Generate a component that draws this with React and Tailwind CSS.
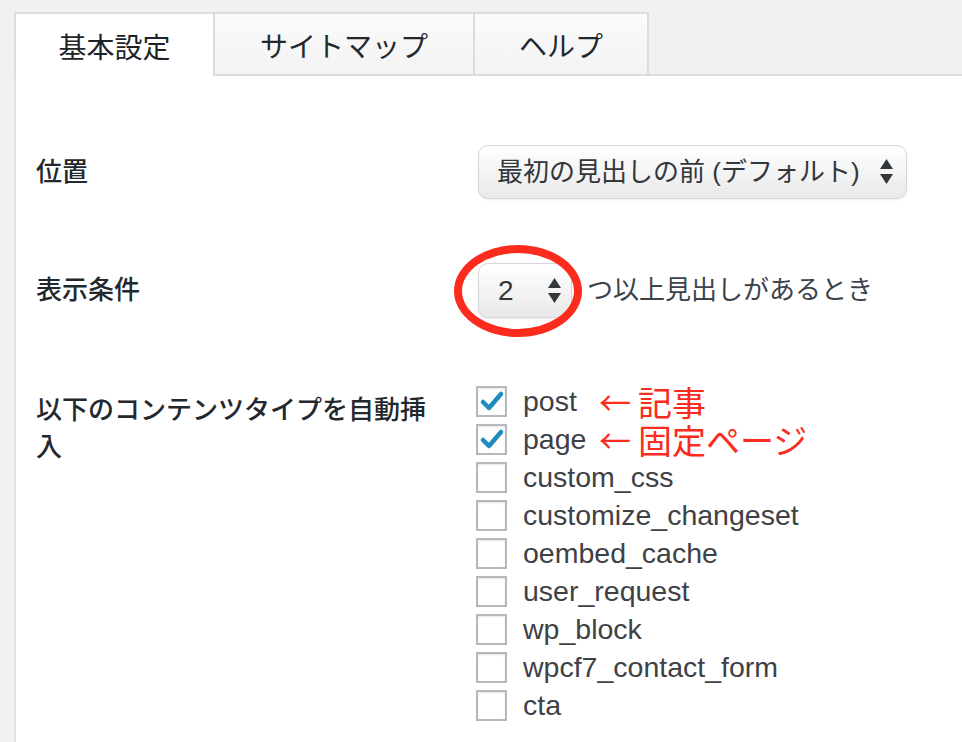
const TYPES = [
  { name: 'post', checked: true, note: '記事' },
  { name: 'page', checked: true, note: '固定ページ' },
  { name: 'custom_css' },
  { name: 'customize_changeset' },
  { name: 'oembed_cache' },
  { name: 'user_request' },
  { name: 'wp_block' },
  { name: 'wpcf7_contact_form' },
  { name: 'cta' },
]

function Arrows() {
  return (
    <svg width="13" height="26" viewBox="0 0 13 26" className="shrink-0">
      <path d="M6.5 0 L13 10 L0 10 Z" fill="#32373c" />
      <path d="M0 15 L13 15 L6.5 25 Z" fill="#32373c" />
    </svg>
  )
}

function Check() {
  return (
    <svg width="27" height="27" viewBox="0 0 27 27">
      <path d="M5 14 L11 20 L23 6" fill="none" stroke="#1e8cbe" strokeWidth="4.5" strokeLinejoin="round" strokeLinecap="round" />
    </svg>
  )
}

export default function App() {
  return (
    <div className="w-[962px] h-[742px] overflow-hidden bg-[#f1f1f1] pt-3 pl-[14px] font-['Liberation_Sans','Noto_Sans_CJK_JP',sans-serif]">
      <div className="flex h-16">
        <div className="w-[201px] border-2 border-b-0 border-[#dcdcdc] bg-white flex items-center justify-center pt-2 text-[28px] text-[#1d2327]">
          基本設定
        </div>
        <div className="w-[260px] border-y-2 border-r-2 border-[#dcdcdc] bg-gradient-to-b from-[#fbfbfb] to-[#f3f3f3] flex items-center justify-center pt-2 text-[28px] text-[#23282d]">
          サイトマップ
        </div>
        <div className="w-[174px] border-y-2 border-r-2 border-[#dcdcdc] bg-gradient-to-b from-[#fbfbfb] to-[#f3f3f3] flex items-center justify-center pt-2 text-[28px] text-[#23282d]">
          ヘルプ
        </div>
        <div className="flex-1 border-b-2 border-[#dcdcdc]" />
      </div>

      <div className="bg-white border-l-2 border-[#e2e2e2] h-full pl-5">
        <div className="flex items-center pt-[69px]">
          <div className="w-[442px] text-[26px] font-medium text-[#23282d]">位置</div>
          <div className="w-[429px] h-[54px] rounded-[10px] border border-[#d6d6d6] bg-gradient-to-b from-white via-[#f4f4f4] to-[#e9e9e9] shadow-[0_1px_2px_rgba(0,0,0,0.08)] flex items-center justify-between pl-[18px] pr-[13px]">
            <span className="text-[26px] text-[#32373c]">最初の見出しの前 (デフォルト)</span>
            <Arrows />
          </div>
        </div>

        <div className="flex items-center mt-[64px]">
          <div className="w-[442px] text-[26px] font-medium text-[#23282d]">表示条件</div>
          <div className="relative">
            <div className="w-[94px] h-[55px] rounded-[10px] border border-[#d6d6d6] bg-gradient-to-b from-white via-[#f4f4f4] to-[#e9e9e9] shadow-[0_1px_2px_rgba(0,0,0,0.08)] flex items-center justify-between pl-[19px] pr-[10px]">
              <span className="text-[28px] text-[#32373c]">2</span>
              <Arrows />
            </div>
            <div className="absolute -left-6 -top-[18px] w-[128px] h-[92px] rounded-[50%] border-[8px] border-[#fb2b1d]" />
          </div>
          <span className="ml-[15px] text-[26px] text-[#3c434a]">つ以上見出しがあるとき</span>
        </div>

        <div className="flex items-start mt-[68px]">
          <div className="w-[440px] pr-[40px] pt-[6px] text-[26px] leading-[37px] font-medium text-[#23282d]">
            以下のコンテンツタイプを自動挿入
          </div>
          <div className="flex flex-col gap-[7px]">
            {TYPES.map(t => (
              <div key={t.name} className="flex items-center h-[31px]">
                <span className="w-[31px] h-[31px] border-2 border-[#b4b9be] bg-white shadow-[inset_0_1px_2px_rgba(0,0,0,0.1)] flex items-center justify-center shrink-0">
                  {t.checked && <Check />}
                </span>
                <span className={`ml-4 text-[28.5px] text-[#3e4146] whitespace-nowrap ${t.note ? 'w-[76px]' : ''}`}>
                  {t.name}
                </span>
                {t.note && (
                  <span className="flex items-center font-['Noto_Sans_CJK_JP',sans-serif] text-[34px] leading-[31px] text-[#fb2b1d] whitespace-nowrap">
                    <span className="text-[32px]">←</span>
                    <span className="ml-[7px]">{t.note}</span>
                  </span>
                )}
              </div>
            ))}
          </div>
        </div>
      </div>
    </div>
  )
}
